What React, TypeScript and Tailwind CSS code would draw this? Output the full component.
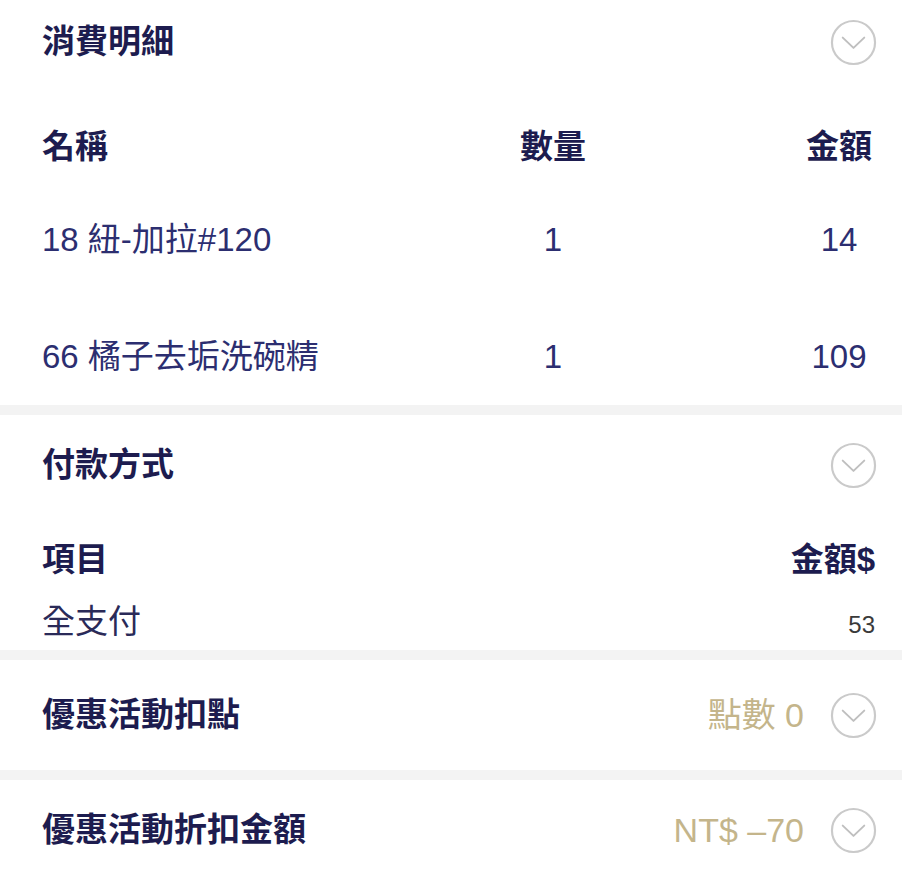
import React from "react";

const font = "font-['Liberation_Sans','Noto_Sans_CJK_TC',sans-serif]";

function CircleChevron() {
  return (
    <svg width="47" height="47" viewBox="0 0 48 48" fill="none" className="shrink-0">
      <circle cx="24" cy="24" r="22" stroke="#cacaca" strokeWidth="2.2" />
      <path d="M13 19 L24 29.5 L35 19" stroke="#bfbfbf" strokeWidth="2" strokeLinecap="round" strokeLinejoin="round" />
    </svg>
  );
}

function Band() {
  return <div className="h-[10px] bg-[#f3f3f3]" />;
}

const items = [
  { name: "18 紐-加拉#120", qty: 1, amount: 14 },
  { name: "66 橘子去垢洗碗精", qty: 1, amount: 109 },
];

export default function App() {
  return (
    <div className={`w-[902px] h-[896px] bg-white overflow-hidden ${font}`}>
      {/* 消費明細 */}
      <div className="pl-[42px] pr-[25px]">
        <div className="h-[84px] flex items-center justify-between">
          <h2 className="text-[33px] font-bold text-[#1d1c4f]">消費明細</h2>
          <CircleChevron />
        </div>

        <div className="mt-[33px] h-[60px] flex items-center pr-[3px] text-[33px] font-bold text-[#1d1c4f]">
          <div className="flex-1">名稱</div>
          <div className="w-[120px] text-center">數量</div>
          <div className="w-[191px]" />
          <div className="w-[70px] text-center">金額</div>
        </div>

        {items.map((item, i) => (
          <div
            key={item.name}
            className={`h-[60px] flex items-center pr-[3px] text-[33px] text-[#2c2e70] ${i === 0 ? "mt-[33px]" : "mt-[57px]"}`}
          >
            <div className="flex-1">{item.name}</div>
            <div className="w-[120px] text-center">{item.qty}</div>
            <div className="w-[191px]" />
            <div className="w-[70px] text-center">{item.amount}</div>
          </div>
        ))}
        <div className="h-[18px]" />
      </div>

      <Band />

      {/* 付款方式 */}
      <div className="pl-[42px] pr-[25px]">
        <div className="h-[100px] flex items-center justify-between">
          <h2 className="text-[33px] font-bold text-[#1d1c4f]">付款方式</h2>
          <CircleChevron />
        </div>
        <div className="mt-[15px] h-[60px] flex items-center justify-between text-[33px] font-bold text-[#1d1c4f]">
          <span>項目</span>
          <span className="mr-[2px]">金額$</span>
        </div>
        <div className="mt-[10px] h-[44px] flex items-center justify-between">
          <span className="text-[33px] text-[#2a2a58]">全支付</span>
          <span className="text-[24px] text-[#3a3a3a] mr-[2px] mt-[6px]">53</span>
        </div>
        <div className="h-[6px]" />
      </div>

      <Band />

      {/* 優惠活動扣點 */}
      <div className="pl-[42px] pr-[25px] h-[110px] flex items-center justify-between">
        <h2 className="text-[33px] font-bold text-[#1d1c4f]">優惠活動扣點</h2>
        <div className="flex items-center gap-[26px]">
          <span className="text-[34px] text-[#c4b58b]">點數 0</span>
          <CircleChevron />
        </div>
      </div>

      <Band />

      {/* 優惠活動折扣金額 */}
      <div className="pl-[42px] pr-[25px] h-[100px] flex items-center justify-between">
        <h2 className="text-[33px] font-bold text-[#1d1c4f]">優惠活動折扣金額</h2>
        <div className="flex items-center gap-[26px]">
          <span className="text-[34px] text-[#c4b58b]">NT$ –70</span>
          <CircleChevron />
        </div>
      </div>
    </div>
  );
}
